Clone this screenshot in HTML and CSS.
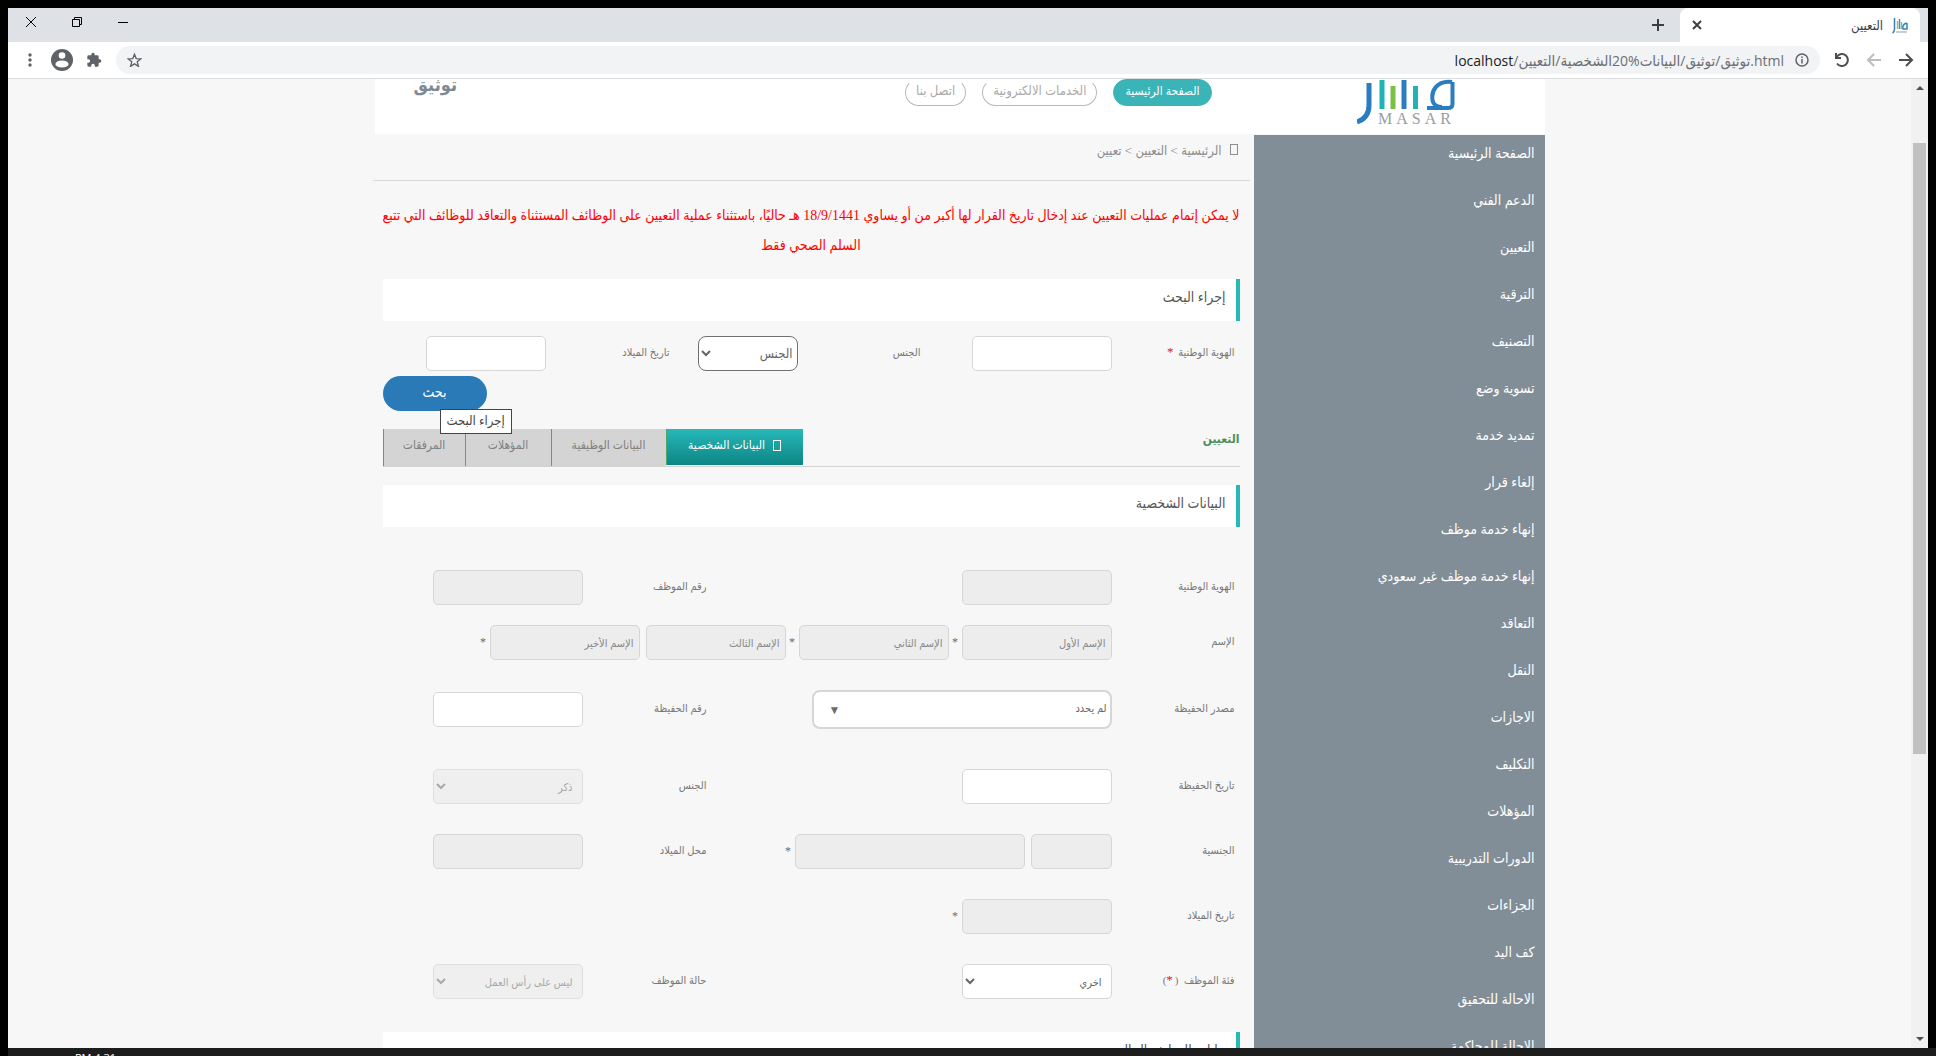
FILE: index.html
```html
<!DOCTYPE html>
<html lang="ar" dir="rtl">
<head>
<meta charset="utf-8">
<title>التعيين</title>
<link rel="stylesheet" href="styles.css">
</head>
<body>
<div class="window">
  <div class="tabstrip">
    <div class="tab-next"></div>
    <div class="tab">
      <svg class="favicon" viewBox="0 0 16 17" aria-hidden="true"><g fill="none" stroke-width="1.500"><path d="M15 6v6h-4q-1-5 4-6" stroke="#3d86b8"/><path d="M9.500 5v7" stroke="#6fbcbf"/><path d="M7.500 2v10" stroke="#5a8fae"/><path d="M5.500 4v8" stroke="#a9b86c"/><path d="M2.500 1v11q0 3-2 4" stroke="#3d7fae"/><path d="M4 15h11" stroke="#b9bdc1"/></g></svg>
      <span class="tab-title">التعيين</span>
      <button class="tab-close" aria-label="إغلاق علامة التبويب"><svg width="10" height="10" viewBox="0 0 10 10"><path d="M1 1l8 8M9 1L1 9" stroke="#3c4043" stroke-width="2"/></svg></button>
    </div>
    <button class="new-tab" aria-label="علامة تبويب جديدة"><svg width="12" height="12" viewBox="0 0 12 12"><path d="M6 0v12M0 6h12" stroke="#3c4043" stroke-width="2"/></svg></button>
    <div class="window-buttons">
      <button aria-label="تصغير"><svg width="12" height="12" viewBox="0 0 12 12"><path d="M1 6.500h10" stroke="#000"/></svg></button>
      <button aria-label="استعادة"><svg width="12" height="12" viewBox="0 0 12 12"><path d="M1.500 3.500h7v7h-7zM3.500 3.500v-2h7v7h-2" fill="none" stroke="#000"/></svg></button>
      <button aria-label="إغلاق"><svg width="12" height="12" viewBox="0 0 12 12"><path d="M1 1l10 10M11 1L1 11" stroke="#000"/></svg></button>
    </div>
  </div>
  <div class="toolbar">
    <button aria-label="رجوع"><svg width="16" height="16" viewBox="0 0 16 16"><path d="M1 8h13M8 2l6 6-6 6" fill="none" stroke="#4a4d51" stroke-width="2"/></svg></button>
    <button aria-label="تقدم"><svg width="16" height="16" viewBox="0 0 16 16"><path d="M15 8H2M8 2L2 8l6 6" fill="none" stroke="#bbbdbf" stroke-width="2"/></svg></button>
    <button aria-label="إعادة تحميل"><svg width="16" height="16" viewBox="0 0 16 16"><path d="M3 4.500A6 6 0 1 1 3 11.500M2 1v5h5" fill="none" stroke="#4a4d51" stroke-width="2"/></svg></button>
    <div class="omnibox">
      <svg width="14" height="14" viewBox="0 0 14 14" aria-hidden="true"><circle cx="7" cy="7" r="6" fill="none" stroke="#5f6368" stroke-width="1.500"/><path d="M7 6v4.500M7 3.500v1.500" stroke="#5f6368" stroke-width="1.500"/></svg>
      <span class="url" dir="ltr"><b>localhost</b>/<bdi>التعيين</bdi>/<bdi>الشخصية</bdi>20%<bdi>البيانات</bdi>/<bdi>توثيق</bdi>/<bdi>توثيق</bdi>.html</span>
      <svg class="star" width="15" height="14" viewBox="0 0 24 23" aria-hidden="true"><path d="M12 2l2.800 7.200 7.700.400-6 4.900 2 7.500L12 17.800 5.500 22l2-7.500-6-4.900 7.700-.400z" fill="none" stroke="#5f6368" stroke-width="2.200"/></svg>
    </div>
    <button aria-label="الإضافات"><svg width="16" height="16" viewBox="0 0 24 24"><path d="M20.500 11H19V7a2 2 0 0 0-2-2h-4V3.500a2.500 2.500 0 0 0-5 0V5H4a2 2 0 0 0-2 2v3.800h1.500a2.700 2.700 0 0 1 0 5.400H2V20a2 2 0 0 0 2 2h3.800v-1.500a2.700 2.700 0 0 1 5.400 0V22H17a2 2 0 0 0 2-2v-4h1.500a2.500 2.500 0 0 0 0-5z" fill="#5f6368"/></svg></button>
    <button class="account" aria-label="الحساب"><svg width="22" height="22" viewBox="0 0 22 22"><circle cx="11" cy="11" r="11" fill="#5f6368"/><circle cx="11" cy="6.500" r="3.300" fill="#fff"/><ellipse cx="11" cy="15" rx="6.600" ry="3.600" fill="#fff"/></svg></button>
    <button aria-label="القائمة"><svg width="4" height="14" viewBox="0 0 4 14"><g fill="#5f6368"><circle cx="2" cy="2" r="1.700"/><circle cx="2" cy="7" r="1.700"/><circle cx="2" cy="12" r="1.700"/></g></svg></button>
  </div>
  <div class="viewport">
    <div class="scrollbar"><i class="arrow-up"></i><i class="thumb"></i><i class="arrow-down"></i></div>
    <div class="page">
      <header class="site-header">
        <a class="logo" href="#" aria-label="MASAR">
          <svg width="98" height="47" viewBox="0 0 98 47"><g fill="none"><path d="M95.500 3v22q0 4-5 4H70" stroke="#2b7cc0" stroke-width="4"/><path d="M95 3C80 1 73 12 76 23q2 5 9 5" stroke="#2b7cc0" stroke-width="4"/><path d="M58.500 7v23" stroke="#1fb3b3" stroke-width="5"/><path d="M47 1v29" stroke="#2b7cc0" stroke-width="5"/><path d="M36 7v23" stroke="#7ac143" stroke-width="5"/><path d="M25 1v29" stroke="#1fb3b3" stroke-width="5"/><path d="M12 4v22q0 13-12 17" stroke="#2b7cc0" stroke-width="5"/></g><text class="logo-name" x="21" y="45">MASAR</text></svg>
        </a>
        <nav class="pills">
          <a class="pill active" href="#">الصفحة الرئيسية</a>
          <a class="pill" href="#">الخدمات الالكترونية</a>
          <a class="pill" href="#">اتصل بنا</a>
        </nav>
        <div class="site-title">توثيق</div>
      </header>
      <div class="columns">
        <aside class="sidebar">
          <a href="#">الصفحة الرئيسية</a>
          <a href="#">الدعم الفني</a>
          <a href="#">التعيين</a>
          <a href="#">الترقية</a>
          <a href="#">التصنيف</a>
          <a href="#">تسوية وضع</a>
          <a href="#">تمديد خدمة</a>
          <a href="#">إلغاء قرار</a>
          <a href="#">إنهاء خدمة موظف</a>
          <a href="#">إنهاء خدمة موظف غير سعودي</a>
          <a href="#">التعاقد</a>
          <a href="#">النقل</a>
          <a href="#">الاجازات</a>
          <a href="#">التكليف</a>
          <a href="#">المؤهلات</a>
          <a href="#">الدورات التدريبية</a>
          <a href="#">الجزاءات</a>
          <a href="#">كف اليد</a>
          <a href="#">الاحالة للتحقيق</a>
          <a href="#">الاحالة للمحاكمة</a>
        </aside>
        <main class="content">
          <div class="breadcrumb"><i class="glyph-box"></i><a href="#">الرئيسية</a> &gt; <a href="#">التعيين</a> &gt; <span>تعيين</span></div>
          <div class="body">
            <p class="warning">لا يمكن إتمام عمليات التعيين عند إدخال تاريخ القرار لها أكبر من أو يساوي 18/9/1441 هـ حاليًا، باستثناء عملية التعيين على الوظائف المستثناة والتعاقد للوظائف التي تتبع السلم الصحي فقط</p>
            <h2 class="panel-title">إجراء البحث</h2>
            <form>
              <div class="search-row">
                <label for="s-id">الهوية الوطنية <em>*</em></label>
                <div class="field"><input id="s-id" class="w140" type="text"></div>
                <label for="s-gender">الجنس</label>
                <div class="field"><select id="s-gender" class="w100 dark"><option>الجنس</option></select></div>
                <label for="s-dob">تاريخ الميلاد</label>
                <div class="field"><input id="s-dob" class="w120" type="text"></div>
              </div>
              <div class="search-actions">
                <button class="search-button" type="button">بحث</button>
                <div class="tooltip" role="tooltip">إجراء البحث</div>
              </div>
            </form>
            <div class="tabs">
              <h3>التعيين</h3>
              <div class="tab-list">
                <button class="step active"><i class="glyph-box"></i>البيانات الشخصية</button>
                <button class="step job">البيانات الوظيفية</button>
                <button class="step">المؤهلات</button>
                <button class="step">المرفقات</button>
              </div>
            </div>
            <h2 class="panel-title">البيانات الشخصية</h2>
            <form class="details">
              <div class="row">
                <label for="d-id">الهوية الوطنية</label>
                <div class="field"><input id="d-id" type="text" disabled></div>
                <label for="d-no">رقم الموظف</label>
                <div class="field"><input id="d-no" type="text" disabled></div>
              </div>
              <div class="row names">
                <label for="d-n1">الإسم</label>
                <div class="field">
                  <input id="d-n1" type="text" placeholder="الإسم الأول" disabled><span class="req">*</span><input type="text" aria-label="الإسم الثاني" placeholder="الإسم الثاني" disabled><span class="req">*</span><input class="w140" type="text" aria-label="الإسم الثالث" placeholder="الإسم الثالث" disabled><span class="space"></span><input type="text" aria-label="الإسم الأخير" placeholder="الإسم الأخير" disabled><span class="req">*</span>
                </div>
              </div>
              <div class="row source">
                <label for="d-src">مصدر الحفيظة</label>
                <div class="field combo"><select id="d-src"><option>لم يحدد</option></select><span class="caret">▼</span></div>
                <label for="d-hno">رقم الحفيظة</label>
                <div class="field"><input id="d-hno" type="text"></div>
              </div>
              <div class="row after-source">
                <label for="d-hd">تاريخ الحفيظة</label>
                <div class="field"><input id="d-hd" type="text"></div>
                <label for="d-g">الجنس</label>
                <div class="field"><select id="d-g" disabled><option>ذكر</option></select></div>
              </div>
              <div class="row">
                <label for="d-nat">الجنسية</label>
                <div class="field"><input id="d-nat" class="w80" type="text" disabled><span class="space"></span><input class="w230" type="text" aria-label="اسم الجنسية" disabled><span class="req">*</span></div>
                <label for="d-pob">محل الميلاد</label>
                <div class="field"><input id="d-pob" type="text" disabled></div>
              </div>
              <div class="row">
                <label for="d-dob">تاريخ الميلاد</label>
                <div class="field"><input id="d-dob" type="text" disabled><span class="req">*</span></div>
              </div>
              <div class="row">
                <label for="d-cat">فئة الموظف &nbsp;(<em>*</em>)</label>
                <div class="field"><select id="d-cat"><option>اخري</option></select></div>
                <label for="d-st">حالة الموظف</label>
                <div class="field"><select id="d-st" disabled><option>ليس على رأس العمل</option></select></div>
              </div>
            </form>
            <h2 class="panel-title">بيانات الوظيفة الحالية</h2>
          </div>
        </main>
      </div>
    </div>
  </div>
</div>
<div class="taskbar"><span class="clock" dir="ltr">PM 4:31</span></div>
</body>
</html>
```
FILE: styles.css
```css
* { box-sizing: border-box; }

body {
  margin: 0;
  height: 100vh;
  overflow: hidden;
  display: flex;
  flex-direction: column;
  background: #000;
  font-family: "Liberation Serif", "DejaVu Sans Condensed", "DejaVu Sans", serif;
  font-size: 12px;
  color: #6b6b6b;
}

button, input, select { font-family: inherit; }
button { border: 0; background: none; padding: 0; display: flex; align-items: center; justify-content: center; }
a { color: inherit; text-decoration: none; }
svg { display: block; flex: none; }

/* browser window */
.window {
  flex: 1;
  min-height: 0;
  margin: 8px 8px 0;
  display: flex;
  flex-direction: column;
  background: #fff;
}

.tabstrip { display: flex; height: 34px; flex: none; background: #dee1e6; }
.tab-next { width: 8px; background: #dee1e6; border-bottom-right-radius: 8px; }
.tab {
  width: 240px;
  display: flex;
  align-items: center;
  padding: 0 12px;
  background: #fff;
  border-radius: 8px 8px 0 0;
  font-family: "Open Sans", "DejaVu Sans Condensed", sans-serif;
  font-size: 13px;
  color: #3c4043;
}
.favicon { width: 16px; height: 17px; margin-left: 9px; }
.tab-title { flex: 1; }
.new-tab { width: 44px; }
.window-buttons { display: flex; margin-right: auto; }
.window-buttons button { width: 46px; height: 28px; }

.toolbar {
  display: flex;
  align-items: center;
  gap: 16px;
  height: 37px;
  flex: none;
  padding: 0 14px 0 20px;
  border-bottom: 1px solid #dadce0;
}
.account { margin: 0 -3px 0 3px; }
.omnibox {
  flex: 1;
  height: 28px;
  margin: 0 -2px;
  padding: 0 11px;
  display: flex;
  align-items: center;
  gap: 11px;
  border-radius: 14px;
  background: #f1f3f4;
}
.url { font: 14px "Open Sans", "DejaVu Sans Condensed", sans-serif; color: #6b6f74; }
.url bdi { font-size: 15px; }
.url b { font-weight: 400; color: #202124; }
.star { margin-right: auto; }

.viewport { flex: 1; min-height: 0; display: flex; background: #f7f7f7; overflow: hidden; }
.scrollbar {
  width: 17px;
  flex: none;
  display: flex;
  flex-direction: column;
  align-items: center;
  padding: 7px 0;
  background: #f1f1f1;
}
.arrow-up, .arrow-down { border: 4px solid transparent; }
.arrow-up { border-top: 0; border-bottom-color: #505050; }
.arrow-down { border-bottom: 0; border-top-color: #505050; margin-top: auto; }
.thumb { width: 13px; height: 64%; margin-top: 53px; background: #c1c1c1; }

/* page */
.page { flex: 1; min-width: 0; }
.site-header {
  max-width: 1170px;
  height: 55px;
  margin: 0 auto;
  padding: 0 90px;
  display: flex;
  align-items: flex-start;
  background: #fff;
}
.logo-name { font: 16px "Liberation Serif", serif; letter-spacing: 4px; fill: #999da1; direction: ltr; }
.pills { display: flex; gap: 16px; margin-right: 145px; }
.pill {
  height: 27px;
  padding: 0 10px;
  border: 1px solid #b9b9b9;
  border-top-color: transparent;
  border-radius: 14px;
  font-size: 13px;
  line-height: 22px;
  color: #aaa;
}
.pill.active { padding: 0 11px; background: #3bb4b8; border-color: #3bb4b8; font-size: 12px; color: #fff; }
.site-title { margin-right: auto; margin-left: -51px; font-size: 18px; line-height: 12px; font-weight: 700; color: #7e8a93; }

.columns { max-width: 1170px; margin: 0 auto; display: flex; }
.sidebar {
  width: 291px;
  flex: none;
  margin-top: 1px;
  background: #828e97;
  color: #fff;
  font-size: 14px;
}
.sidebar a { display: block; height: 47px; padding: 0 10px; line-height: 38px; }

.content { flex: 1; min-width: 0; }
.breadcrumb {
  height: 47px;
  margin: 0 4px 0 -2px;
  padding: 0 12px;
  border-bottom: 1px solid #d9d9d9;
  font-size: 13px;
  line-height: 34px;
  color: #8d8d8d;
}
.glyph-box { display: inline-block; width: 8px; height: 11px; border: 1px solid currentColor; margin-left: 8px; }

.body { padding: 0 14px 0 8px; }
.warning { margin: 0 -8px; padding: 20px 0 18px; font-size: 14px; line-height: 30px; text-align: center; color: #f00; }
.panel-title {
  margin: 0;
  height: 42px;
  padding: 0 10px;
  border-right: 4px solid #27b8b8;
  background: #fff;
  font-size: 14px;
  font-weight: 400;
  line-height: 38px;
  color: #555;
}

.search-row { display: grid; grid-template-columns: 128fr 186fr 128fr 123fr 129fr 163fr; padding-top: 15px; }
label { padding-right: 5px; line-height: 32px; font-size: 11px; color: #777; }
label em { font-style: normal; font-size: 13px; color: #c22; margin-right: 2px; }
.field { display: flex; align-items: flex-start; }

input, select {
  width: 150px;
  height: 35px;
  padding: 0 5px;
  border: 1px solid #d6d6d6;
  border-radius: 5px;
  background: #fff;
  font-size: 11px;
  color: #666;
}
input:disabled, select:disabled { background: #ededed; }
select:disabled { opacity: .7; color: #888; }
input::placeholder { color: #888; opacity: 1; }
.w80 { width: 81px; }
.w100 { width: 100px; }
.w120 { width: 120px; }
.w140 { width: 140px; }
.w230 { width: 230px; }
.dark { padding: 0; border-color: #707070; border-radius: 8px; font-size: 13px; }
.req { width: 13px; line-height: 34px; text-align: center; }
.space { width: 6px; }

.search-actions { position: relative; display: flex; justify-content: flex-end; padding: 5px 0 18px; }
.search-button { width: 104px; height: 35px; padding-bottom: 3px; border-radius: 18px; background: #2a7ab8; font-size: 14px; color: #fff; }
.tooltip {
  position: absolute;
  left: 57px;
  top: 38px;
  z-index: 1;
  height: 25px;
  padding: 0 6px;
  border: 1px solid #444;
  background: #fff;
  font-size: 13px;
  line-height: 22px;
  color: #444;
}

.tabs { display: flex; justify-content: space-between; margin-bottom: 18px; border-bottom: 1px solid #d6d2d2; }
.tabs h3 { margin: 0; font-size: 12px; line-height: 20px; color: #4f8f57; }
.tab-list { display: flex; }
.step {
  width: 86px;
  height: 37px;
  padding-bottom: 4px;
  border-left: 1px solid #4fa868;
  background: #d4d4d4;
  font-size: 12px;
  color: #808080;
}
.step:last-child { width: 82px; }
.step.job { width: 115px; }
.step.active { width: 137px; height: 36px; background: linear-gradient(#27b8b8, #0d8585); color: #fff; }

.details { display: flex; flex-direction: column; gap: 30px; padding: 43px 0 33px; }
.row { display: grid; grid-template-columns: 128fr 400fr 129fr 200fr; }
.row.names { grid-template-columns: 128fr 729fr; margin-top: -10px; }
.row.source input { margin-top: 2px; }
.row.source label { line-height: 36px; }
.row.after-source { margin-top: 10px; }
.combo { position: relative; width: 300px; }
.combo select { width: 300px; height: 39px; padding: 0 3px 4px; border: 2px solid #d6d6d6; border-radius: 8px; appearance: none; }
.caret { position: absolute; left: 17px; top: 13px; line-height: 14px; font-size: 12px; pointer-events: none; }

.taskbar { height: 8px; flex: none; margin-left: 8px; background: #1d1d1d; overflow: hidden; color: #fff; }
.clock { display: block; margin-top: 4px; padding-left: 67px; text-align: left; font: 11px "Open Sans", sans-serif; line-height: 12px; }
```
